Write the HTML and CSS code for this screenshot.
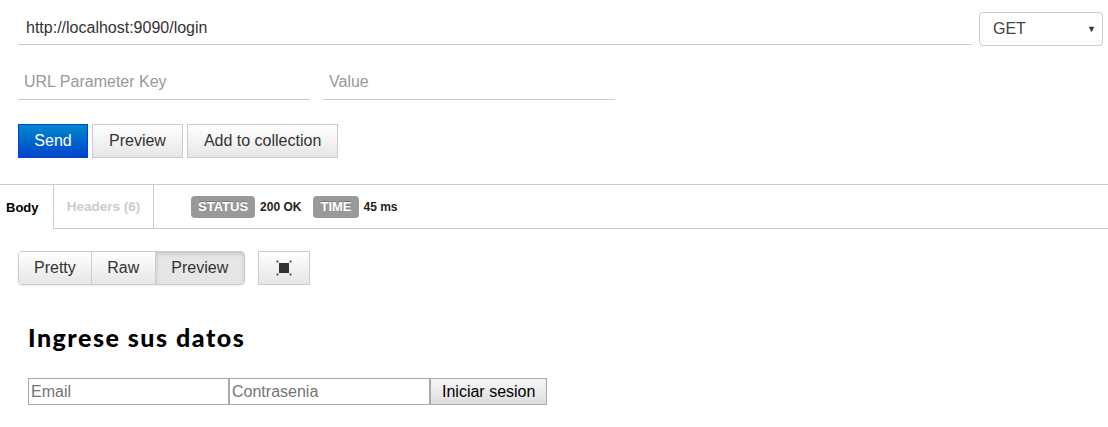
FILE: index.html
```html
<!DOCTYPE html>
<html>
<head>
<meta charset="utf-8">
<link rel="stylesheet" href="styles.css">
</head>
<body>
<div class="top">
  <div class="url-row">
    <div class="url-input">http://localhost:9090/login</div>
    <div class="method">GET<span class="caret">&#9660;</span></div>
  </div>
  <div class="param-row">
    <div class="param">URL Parameter Key</div>
    <div class="param">Value</div>
  </div>
  <div class="actions">
    <div class="btn btn-primary">Send</div>
    <div class="btn">Preview</div>
    <div class="btn">Add to collection</div>
  </div>
</div>
<div class="tabs">
  <div class="tab active">Body</div>
  <div class="tab inactive">Headers (6)</div>
  <div class="tab-rest">
    <span class="badge">STATUS</span><span class="meta">200 OK</span>
    <span class="badge badge-time">TIME</span><span class="meta">45 ms</span>
  </div>
</div>
<div class="view-row">
  <div class="seg">
    <div class="seg-btn">Pretty</div>
    <div class="seg-btn">Raw</div>
    <div class="seg-btn seg-active">Preview</div>
  </div>
  <div class="icon-btn">
    <svg width="20" height="20" viewBox="0 0 20 20">
      <rect x="5" y="5" width="10" height="10" fill="#333"/>
      <rect x="2.5" y="2.5" width="2" height="2" fill="#555"/>
      <rect x="15.5" y="2.5" width="2" height="2" fill="#555"/>
      <rect x="2.5" y="15.5" width="2" height="2" fill="#555"/>
      <rect x="15.5" y="15.5" width="2" height="2" fill="#555"/>
    </svg>
  </div>
</div>
<div class="preview">
  <h1 class="title">Ingrese sus datos</h1>
  <form class="login">
    <input class="field" type="text" placeholder="Email">
    <input class="field" type="password" placeholder="Contrasenia">
    <button class="submit" type="button">Iniciar sesion</button>
  </form>
</div>
</body>
</html>
```
FILE: styles.css
```css
html, body {
  margin: 0;
  padding: 0;
  background: #fff;
  font-family: "Liberation Sans", Arial, sans-serif;
  color: #333;
}
.top {
  padding: 12px 5px 0 18px;
}
.url-row {
  display: flex;
  gap: 7px;
  align-items: flex-start;
}
.url-input {
  flex: 1;
  height: 33px;
  box-sizing: border-box;
  border-bottom: 1px solid #ccc;
  padding: 7px 0 0 8px;
  font-size: 16px;
  color: #333;
}
.method {
  width: 124px;
  height: 34px;
  box-sizing: border-box;
  border: 1px solid #ccc;
  border-radius: 4px;
  display: flex;
  align-items: center;
  justify-content: space-between;
  padding: 0 6px 0 13px;
  font-size: 16px;
  color: #444;
}
.caret {
  font-size: 9px;
  color: #333;
}
.param-row {
  display: flex;
  gap: 13px;
  margin-top: 20px;
}
.param {
  width: 292px;
  height: 34px;
  box-sizing: border-box;
  border-bottom: 1px solid #ccc;
  padding: 7px 0 0 6px;
  font-size: 16px;
  color: #999;
}
.actions {
  display: flex;
  gap: 4px;
  margin-top: 24px;
}
.btn {
  height: 34px;
  box-sizing: border-box;
  border: 1px solid #ccc;
  background: linear-gradient(#fff, #e6e6e6);
  padding: 0 16px;
  display: flex;
  align-items: center;
  font-size: 16px;
  color: #333;
}
.btn-primary {
  width: 70px;
  justify-content: center;
  padding: 0;
  background: linear-gradient(#0088cc, #0044cc);
  border-color: #0044cc;
  color: #fff;
}
.tabs {
  display: flex;
  margin-top: 26px;
  height: 45px;
  box-sizing: border-box;
  border-top: 1px solid #ccc;
}
.tab {
  height: 44px;
  box-sizing: border-box;
  display: flex;
  align-items: center;
  font-size: 13px;
  font-weight: bold;
}
.active {
  width: 53px;
  padding-left: 6px;
  color: #000;
}
.inactive {
  width: 101px;
  justify-content: center;
  color: #ccc;
  border-left: 1px solid #ccc;
  border-right: 1px solid #ccc;
  border-bottom: 1px solid #ccc;
  font-size: 13.5px;
}
.tab-rest {
  flex: 1;
  height: 44px;
  box-sizing: border-box;
  border-bottom: 1px solid #ccc;
  display: flex;
  align-items: center;
  padding-left: 37px;
}
.badge {
  background: #999;
  color: #fff;
  font-size: 13px;
  font-weight: bold;
  border-radius: 4px;
  height: 22px;
  line-height: 22px;
  padding: 0 7px;
  text-shadow: 0 -1px 0 rgba(0,0,0,0.25);
}
.meta {
  font-size: 12px;
  font-weight: bold;
  color: #222;
  margin-left: 5px;
}
.badge-time {
  margin-left: 12px;
}
.view-row {
  display: flex;
  gap: 13px;
  padding-left: 18px;
  margin-top: 22px;
}
.seg {
  display: flex;
  border: 1px solid #ccc;
  border-radius: 4px;
  overflow: hidden;
  height: 34px;
  box-sizing: border-box;
  box-shadow: 0 1px 2px rgba(0,0,0,0.08);
}
.seg-btn {
  display: flex;
  align-items: center;
  padding: 0 15px;
  font-size: 16px;
  color: #333;
  background: linear-gradient(#fff, #e6e6e6);
  border-left: 1px solid #ccc;
}
.seg-btn:first-child {
  border-left: 0;
}
.seg-btn + .seg-btn {
  padding: 0 15.5px;
}
.seg-active {
  background: #e6e6e6;
  box-shadow: inset 0 2px 4px rgba(0,0,0,0.15);
}
.icon-btn {
  width: 52px;
  height: 34px;
  box-sizing: border-box;
  border: 1px solid #ccc;
  background: linear-gradient(#fff, #e6e6e6);
  display: flex;
  align-items: center;
  justify-content: center;
}
.preview {
  padding: 0 0 0 28px;
}
.title {
  font-family: "Lato", sans-serif;
  font-weight: 900;
  font-size: 25px;
  letter-spacing: 1.5px;
  color: #000;
  margin: 37px 0 0 0;
  line-height: 30px;
}
.login {
  display: flex;
  margin-top: 26px;
}
.field {
  width: 201px;
  height: 27px;
  box-sizing: border-box;
  border: 1px solid #a9a9a9;
  margin: 0;
  padding: 1px 2px;
  font-family: "Liberation Sans", Arial, sans-serif;
  font-size: 16px;
  color: #333;
  border-radius: 0;
}
.field::placeholder {
  color: #757575;
}
.submit {
  height: 27px;
  box-sizing: border-box;
  border: 1px solid #a9a9a9;
  background: linear-gradient(#f6f6f6, #dddddd);
  margin: 0;
  padding: 0 11px;
  font-family: "Liberation Sans", Arial, sans-serif;
  font-size: 16px;
  color: #000;
  border-radius: 0;
}
```
